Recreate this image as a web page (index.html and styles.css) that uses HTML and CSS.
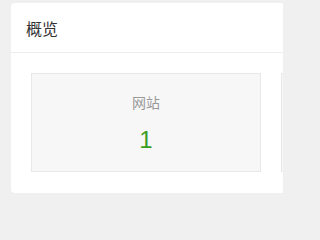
FILE: index.html
```html
<!DOCTYPE html>
<html lang="zh">
<head>
<meta charset="utf-8">
<link rel="stylesheet" href="styles.css">
</head>
<body>
<div class="panel">
  <div class="panel-header">概览</div>
  <div class="panel-body">
    <div class="stat">
      <div class="stat-label">网站</div>
      <div class="stat-value">1</div>
    </div>
    <div class="stat" aria-hidden="true"></div>
  </div>
</div>
</body>
</html>
```
FILE: styles.css
```css
html {
  width: 283px;
  height: 208px;
  overflow: hidden;
  background: #f0f0f0;
}
html, body {
  margin: 0;
  padding: 0;
}
body {
  width: 283px;
  height: 208px;
  overflow: hidden;
  box-sizing: border-box;
  padding: 3px 0 0 11px;
  font-family: "Microsoft YaHei", "Noto Sans CJK SC", sans-serif;
  background: #f0f0f0;
}
.panel {
  width: 600px;
  height: 190px;
  background: #fff;
  border-radius: 4px;
  box-sizing: border-box;
}
.panel-header {
  height: 49px;
  border-bottom: 1px solid #eeeeee;
  padding-left: 15px;
  font-size: 16px;
  line-height: 50px;
  color: #333;
}
.panel-body {
  display: flex;
  gap: 20px;
  padding: 20px;
}
.stat {
  width: 230px;
  height: 99px;
  box-sizing: border-box;
  border: 1px solid #e8e8e8;
  background: #f7f7f7;
  display: flex;
  flex-direction: column;
  align-items: center;
  padding-top: 21px;
  flex-shrink: 0;
}
.stat-label {
  font-size: 14px;
  line-height: 14px;
  color: #999;
}
.stat-value {
  margin-top: 19px;
  font-family: "Liberation Sans", Arial, sans-serif;
  font-size: 24px;
  line-height: 24px;
  color: #3a9d23;
}
```
